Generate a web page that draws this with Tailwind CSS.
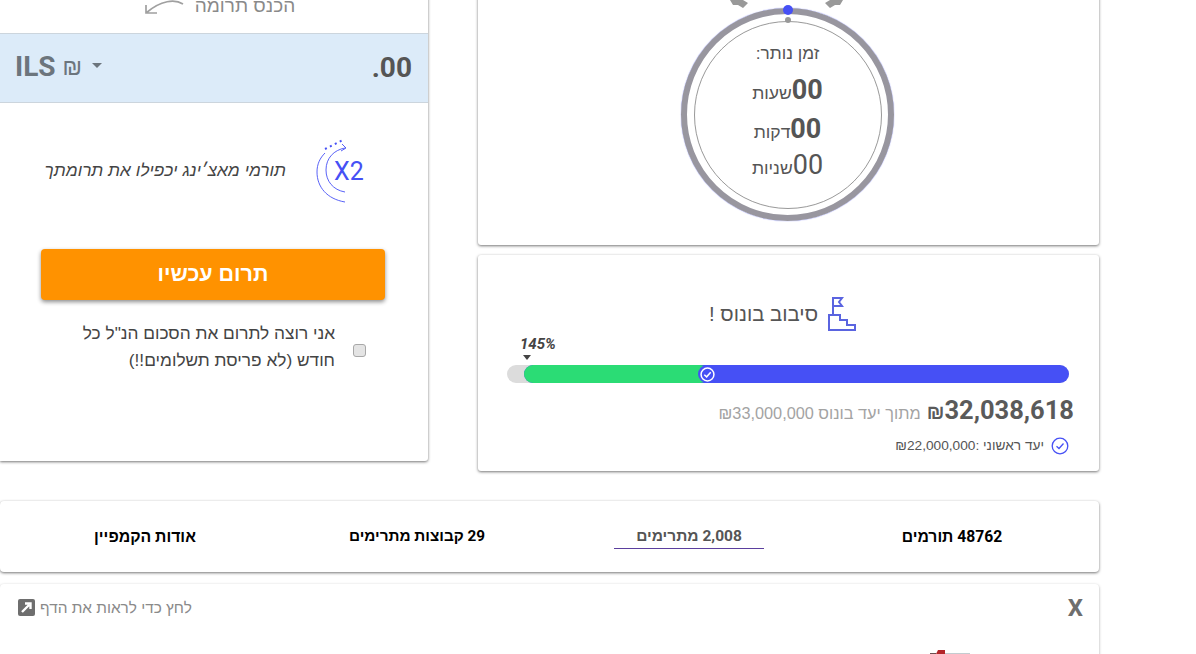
<!DOCTYPE html>
<html lang="he" dir="rtl">
<head>
<meta charset="utf-8">
<script src="https://cdn.jsdelivr.net/npm/@tailwindcss/browser@4"></script>
</head>
<body class="bg-white overflow-hidden">
<div dir="ltr" class="w-[1196px] h-[654px] overflow-hidden font-['Roboto','Liberation_Sans',sans-serif] text-[#555]">
  <div class="w-[1099px] -mt-[40px] flex flex-col">
    <div class="flex gap-[50px] items-start">
      <!-- Left donation card -->
      <section class="w-[428px] h-[501px] bg-white rounded-br-[3px] shadow-[0_1px_3px_rgba(0,0,0,0.55)] flex flex-col">
        <div class="h-[73px] pt-[33px] flex justify-center items-start gap-[10px] pl-[12px] pr-[2px]">
          <svg class="w-[42px] h-[20px] mt-[6px]" viewBox="0 0 42 20" fill="none" stroke="#a0a0a0" stroke-width="1.7"><path d="M40 5 C32 0 18 1 3 14 M3 6 L3 14 L14 14"/></svg>
          <span dir="rtl" class="font-['Liberation_Sans'] text-[19px] leading-[26px] text-[#8a8a8a]">הכנס תרומה</span>
        </div>
        <div class="h-[70px] bg-[#dcebf9] border-y border-[#ccd5dd] flex items-center justify-between pl-[15px] pr-[16px]">
          <div class="flex items-center text-[#6c757d] -mt-[2px]">
            <span class="text-[28px] font-bold leading-none">ILS</span>
            <span class="font-['Liberation_Sans'] text-[23px] ml-[7px] leading-none">₪</span>
            <span class="ml-[10px] mb-[4px] w-0 h-0 border-x-[5px] border-x-transparent border-t-[5px] border-t-[#6c757d]"></span>
          </div>
          <span class="text-[28px] font-bold leading-none text-[#555] -mt-[1px]">.00</span>
        </div>
        <div class="mt-[36px] h-[64px] flex items-center justify-end pr-[62px] gap-[30px]">
          <span dir="rtl" class="font-['Liberation_Sans'] text-[17.3px] italic text-[#444]">תורמי מאצ׳ינג יכפילו את תרומתך</span>
          <svg class="w-[50px] h-[64px]" viewBox="0 0 50 64" fill="none" stroke="#4650f5">
            <path d="M29 63 C11 60 1 48 1 33 C1 25 4 19 9 14" stroke-width="0.9"/>
            <path d="M29 53 C17 51 10 42 10 31 C10 19 18 11 29 9" stroke-width="0.9"/>
            <path d="M26 5 L30 9 L25 12" stroke-width="0.9"/>
            <path d="M9 10 L27 1" stroke-width="2" stroke-dasharray="2 3.5"/>
            <text x="18" y="41" font-size="25" fill="#4650f5" stroke="none" font-family="Roboto">X2</text>
          </svg>
        </div>
        <div class="mt-[46px] ml-[41px] w-[344px] h-[51px] bg-[#ff9200] rounded-[4px] shadow-[0_2px_4px_rgba(0,0,0,0.45)] flex items-center justify-center">
          <span dir="rtl" class="font-['Liberation_Sans'] text-[21.5px] font-bold text-white">תרום עכשיו</span>
        </div>
        <div class="mt-[20px] flex justify-end items-start pr-[62px] gap-[18px]">
          <p dir="rtl" class="font-['Liberation_Sans'] w-[270px] text-[17.3px] leading-[27px] text-[#444]">אני רוצה לתרום את הסכום הנ"ל כל חודש (לא פריסת תשלומים!!)</p>
          <input type="checkbox" class="mt-[24px] w-[13px] h-[13px] appearance-none bg-[#e4e4e4] border border-[#a8a8a8] rounded-[3px]">
        </div>
      </section>
      <!-- Right column -->
      <div class="w-[621px] flex flex-col gap-[10px]">
        <section class="h-[285px] bg-white rounded-b-[3px] shadow-[0_1px_3px_rgba(0,0,0,0.55)] relative flex justify-center items-end pb-[24px] pr-[2px]">
          <div class="relative w-[213px] h-[213px] rounded-full border-[6px] border-[#98969f] shadow-[0_0_1px_#4650f5] flex items-center justify-center">
            <span class="absolute -top-[9px] left-1/2 -ml-[5px] w-[10px] h-[10px] rounded-full bg-[#4650f5]"></span>
            <span class="absolute top-[3px] left-1/2 -ml-[3px] w-[6px] h-[6px] rounded-full bg-[#999]"></span>
            <svg class="absolute -top-[14px] left-[43px] w-[18px] h-[8px]" viewBox="0 0 18 8" fill="#999"><path d="M0 0 H13 L18 3 L13 8 L8 5 L3 5 Z"/></svg>
            <svg class="absolute -top-[14px] left-[138px] w-[18px] h-[8px]" viewBox="0 0 18 8" fill="#999"><path d="M18 0 H5 L0 3 L5 8 L10 5 L15 5 Z"/></svg>
            <div class="w-[188px] h-[188px] rounded-full border border-[#999] flex flex-col items-center text-[#555] font-['Liberation_Sans']">
              <span dir="rtl" class="mt-[18px] text-[17.3px] leading-[26px]">זמן נותר:</span>
              <div dir="rtl" class="mt-[4px] flex items-baseline h-[38px]"><b class="font-['Roboto'] text-[27px]">00</b><span class="text-[17.5px]">שעות</span></div>
              <div dir="rtl" class="mt-[1px] flex items-baseline h-[38px]"><b class="font-['Roboto'] text-[27px]">00</b><span class="text-[17.5px]">דקות</span></div>
              <div dir="rtl" class="-mt-[2px] flex items-baseline h-[38px]"><span class="font-['Roboto'] text-[27px]">00</span><span class="text-[17.5px]">שניות</span></div>
            </div>
          </div>
        </section>
        <section class="h-[216px] bg-white rounded-[3px] shadow-[0_1px_3px_rgba(0,0,0,0.55)] flex flex-col">
          <div class="mt-[41px] h-[36px] flex items-center justify-center gap-[9px] pr-[11px]">
            <span dir="rtl" class="font-['Liberation_Sans'] text-[20.4px] text-[#555]">סיבוב בונוס !</span>
            <svg class="w-[30px] h-[36px]" viewBox="0 0 30 36" fill="none" stroke="#5a64e0" stroke-width="2"><path d="M6 19 V2 H15 L12 6 L15 10 H6 M2 19 H13 V24 H20 V29 H28 V34 H2 Z"/></svg>
          </div>
          <div class="mt-[4px] pl-[42px] flex flex-col items-start">
            <span class="text-[15px] font-bold italic leading-[16px] text-[#444]">145%</span>
            <span class="mt-[3px] ml-[3px] w-0 h-0 border-x-[4px] border-x-transparent border-t-[5px] border-t-[#444]"></span>
          </div>
          <div class="mt-[5px] ml-[29px] w-[562px] h-[18px] rounded-full bg-[#dcdcdc] relative">
            <div class="absolute inset-y-0 left-[17px] right-0 rounded-full bg-[#4650f5]"></div>
            <div class="absolute inset-y-0 left-[17px] w-[185px] rounded-full bg-[#2bdc75]"></div>
            <div class="absolute left-[191px] top-0 w-[18px] h-[18px] rounded-full bg-[#4650f5] flex items-center justify-center">
              <svg class="w-[15px] h-[15px]" viewBox="0 0 14 14" fill="none" stroke="#fff" stroke-width="1.4"><circle cx="7" cy="7" r="6"/><path d="M4 7.2 L6.2 9.2 L10 5"/></svg>
            </div>
          </div>
          <div dir="rtl" class="mt-[11px] pr-[25px] flex items-baseline gap-[6px]">
            <b class="text-[25.5px] leading-[32px] text-[#5a5a5a]"><span class="font-['Liberation_Sans'] text-[20px]">₪</span>32,038,618</b>
            <span class="font-['Liberation_Sans'] text-[16.3px] text-[#a3a3a3]">מתוך יעד בונוס ₪33,000,000</span>
          </div>
          <div dir="rtl" class="mt-[8px] pr-[30px] flex items-center gap-[7px]">
            <svg class="w-[18px] h-[18px]" viewBox="0 0 18 18" fill="none" stroke="#4650f5" stroke-width="1.3"><circle cx="9" cy="9" r="7.8"/><path d="M5.5 9.3 L8 11.5 L12.5 6.5"/></svg>
            <span class="font-['Liberation_Sans'] text-[13.7px] text-[#555]">יעד ראשוני :₪22,000,000</span>
          </div>
        </section>
      </div>
    </div>
    <!-- Tabs -->
    <nav dir="rtl" class="mt-[30px] h-[71px] bg-white rounded-[4px] shadow-[0_1px_3px_rgba(0,0,0,0.55)] flex items-center pr-[50px]">
      <span class="w-[194px] text-center text-[15.7px] font-bold text-black">48762 תורמים</span>
      <span class="mr-[91px] w-[150px] h-[25px] leading-[24px] text-center text-[15.5px] font-bold text-[#555] border-b border-[#5b3f9e]">2,008 מתרימים</span>
      <span class="mr-[121px] w-[152px] text-center text-[15.3px] font-bold text-black">29 קבוצות מתרימים</span>
      <span class="mr-[141px] w-[110px] text-center text-[15.8px] font-bold text-black">אודות הקמפיין</span>
    </nav>
    <!-- Bottom card -->
    <section class="mt-[12px] h-[120px] bg-white rounded-t-[4px] shadow-[0_1px_3px_rgba(0,0,0,0.35)] relative px-[16px] pt-[12px] flex justify-between items-start">
      <div class="flex items-center gap-[5px] pl-[2px]">
        <svg class="w-[17px] h-[17px]" viewBox="0 0 17 17"><rect width="17" height="17" rx="2" fill="#6e6e6e"/><path d="M4 13 L11 6 M7 4.5 H12.5 V10" stroke="#fff" stroke-width="2.4" fill="none"/></svg>
        <span dir="rtl" class="font-['Liberation_Sans'] text-[15.4px] text-[#8a8a8a]">לחץ כדי לראות את הדף</span>
      </div>
      <b class="text-[24px] leading-[24px] text-[#6e6e6e]">X</b>
      <svg class="absolute left-[928px] top-[65px] w-[45px] h-[6px]" viewBox="0 0 45 6"><path d="M8 5 L10 1 H17 V5 Z" fill="#b3262a"/><path d="M2 4.5 H8" stroke="#6b5050" stroke-width="1"/><path d="M17 4.5 H42" stroke="#c4ccd0" stroke-width="1"/></svg>
    </section>
  </div>
</div>
</body>
</html>
